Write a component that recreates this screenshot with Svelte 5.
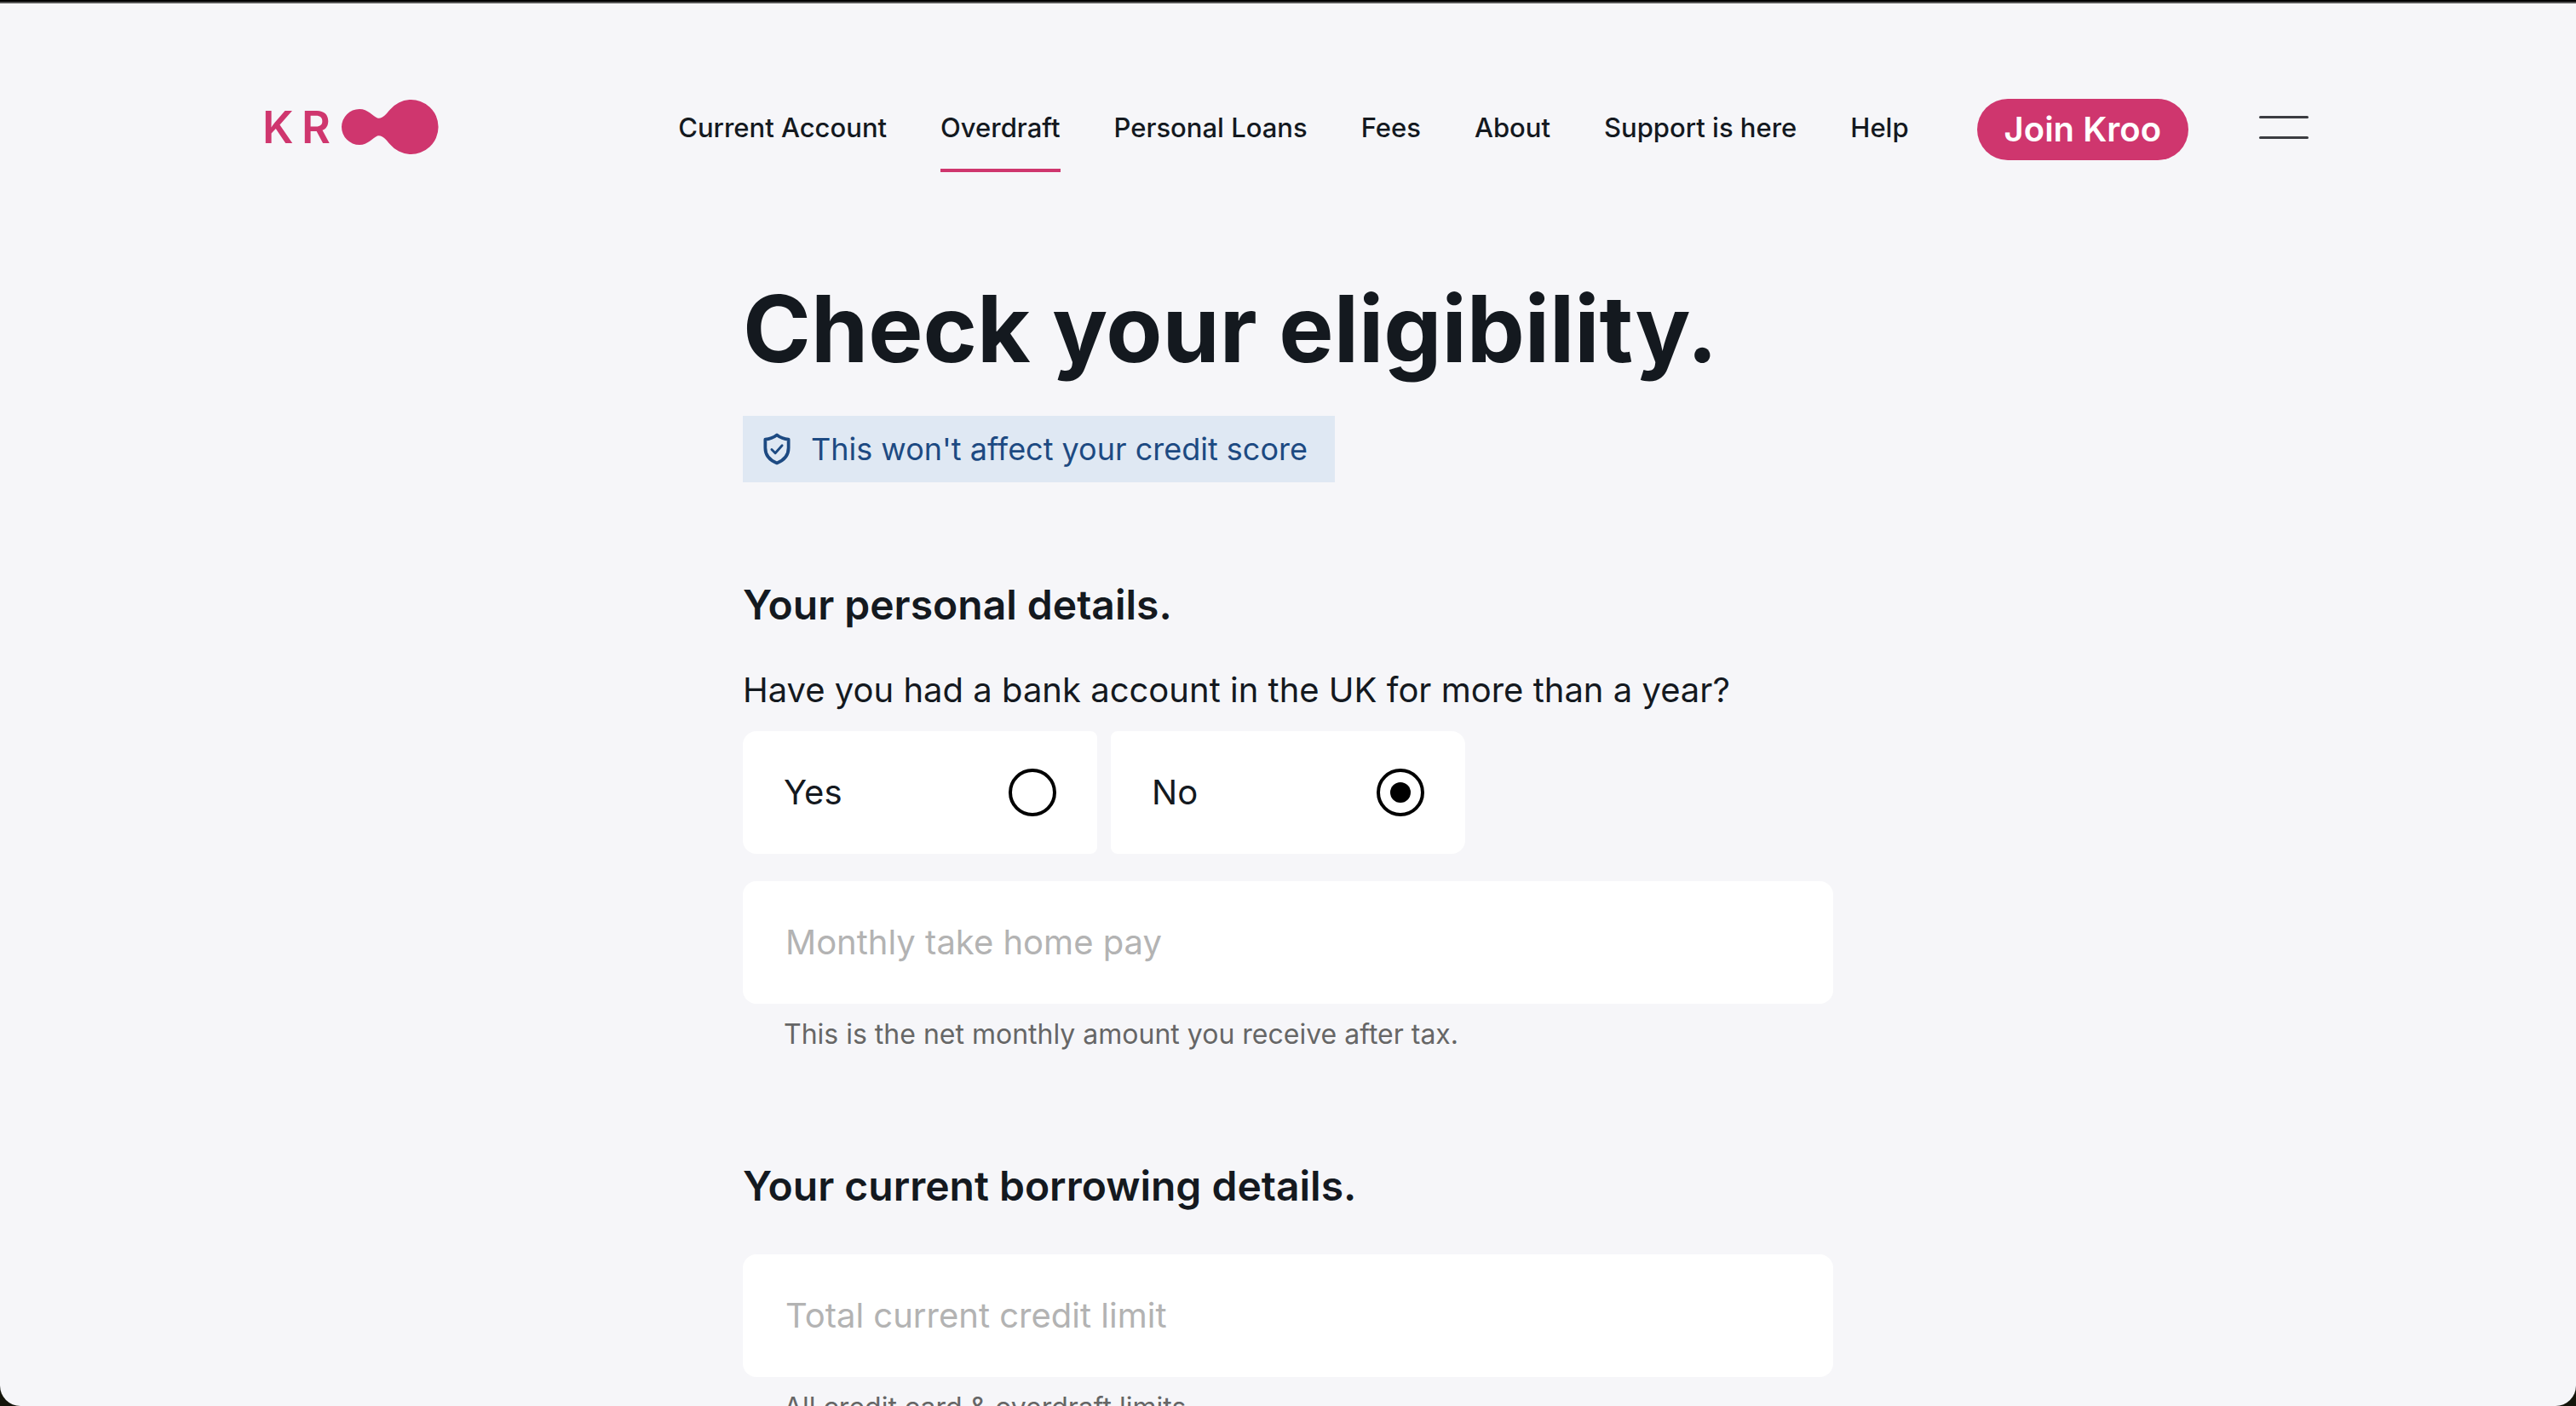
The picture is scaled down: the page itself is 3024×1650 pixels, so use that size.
<script>
  const links = ['Current Account', 'Overdraft', 'Personal Loans', 'Fees', 'About', 'Support is here', 'Help'];
  const current = 'Overdraft';
  let hadAccount = $state('No');
  let pay = $state('');
  let limit = $state('');
</script>

<div class="window">
  <header>
    <a class="logo" href="#home" aria-label="Kroo home">
      <svg viewBox="0 0 204 64" aria-hidden="true">
        <text x="-4 42" y="51">KR</text>
        <path d="M110 11C120 11 125 19 131 21.500C137 23 141 17 146 11.500A32 32 0 1 1 146 52.500C141 47 137 41 131 42.500C125 45 120 53 110 53A21 21 0 1 1 110 11Z" />
      </svg>
    </a>
    <nav aria-label="Main">
      {#each links as link}
        <a href="#{link.toLowerCase().replaceAll(' ', '-')}" class:active={link === current} aria-current={link === current ? 'page' : undefined}>{link}</a>
      {/each}
    </nav>
    <button class="join" type="button">Join Kroo</button>
    <button class="menu" type="button" aria-label="Open menu"><i></i><i></i></button>
  </header>

  <main>
    <h1>Check your eligibility.</h1>
    <p class="notice">
      <svg viewBox="0 0 34 40" aria-hidden="true">
        <path class="shield" d="M17 2.500C13 5.500 8.500 7.500 2.500 8V18.500C2.500 28 8 34 17 37.500C26 34 31.500 28 31.500 18.500V8C25.500 7.500 21 5.500 17 2.500Z" />
        <path class="tick" d="M10.500 20.500L15 25L23.500 15.500" />
      </svg>
      <span>This won't affect your credit score</span>
    </p>

    <form>
      <section>
        <h2>Your personal details.</h2>
        <fieldset>
          <legend>Have you had a bank account in the UK for more than a year?</legend>
          <div class="options">
            {#each ['Yes', 'No'] as option}
              <label class="option">
                <span>{option}</span>
                <input type="radio" name="account" value={option} bind:group={hadAccount} />
              </label>
            {/each}
          </div>
        </fieldset>
        <div class="field">
          <input id="pay" type="text" aria-describedby="pay-hint" bind:value={pay} />
          <label for="pay" class:filled={pay !== ''}>Monthly take home pay</label>
          <p id="pay-hint">This is the net monthly amount you receive after tax.</p>
        </div>
      </section>

      <section>
        <h2>Your current borrowing details.</h2>
        <div class="field">
          <input id="limit" type="text" aria-describedby="limit-hint" bind:value={limit} />
          <label for="limit" class:filled={limit !== ''}>Total current credit limit</label>
          <p id="limit-hint">All credit card &amp; overdraft limits</p>
        </div>
      </section>
    </form>
  </main>
</div>

<style>
  :global(body) {
    margin: 0;
    background: #14150b;
  }

  .window {
    box-sizing: border-box;
    height: 100vh;
    overflow: hidden;
    background: #f6f6f9;
    border-top: 2px solid #000;
    border-radius: 0 0 24px 24px;
    box-shadow: inset 0 2px #555;
    color: #14191f;
    font-family: Inter, "Liberation Sans", sans-serif;
    font-size: 40px;
    line-height: 56px;
  }

  header {
    box-sizing: border-box;
    display: flex;
    align-items: center;
    max-width: 2400px;
    margin: 0 auto;
    padding: 94px 2px 0 0;
  }

  .logo {
    display: block;
    width: 204px;
    height: 64px;
    margin-right: auto;
  }

  .logo svg {
    display: block;
    width: 100%;
    height: 100%;
    overflow: visible;
    fill: #cf366e;
  }

  .logo text {
    font-size: 52px;
    font-weight: 600;
  }

  nav {
    display: flex;
    gap: 63px;
    margin-right: 80px;
  }

  nav a {
    padding: 34px 0 28px;
    border-bottom: 4px solid transparent;
    color: inherit;
    font-size: 31px;
    font-weight: 500;
    line-height: 40px;
    text-decoration: none;
    white-space: nowrap;
  }

  nav a.active {
    border-color: #cf366e;
  }

  button {
    border: 0;
    font: inherit;
    cursor: pointer;
  }

  .join {
    height: 72px;
    margin-top: 6px;
    padding: 0 32px;
    border-radius: 36px;
    background: #cf366e;
    color: #fff;
    font-weight: 600;
    white-space: nowrap;
  }

  .menu {
    display: flex;
    flex-direction: column;
    gap: 21px;
    margin-left: 83px;
    padding: 0;
    background: none;
  }

  .menu i {
    width: 58px;
    height: 3px;
    border-radius: 2px;
    background: #3c3d42;
  }

  main {
    max-width: 1280px;
    margin: 0 auto;
    padding-top: 116px;
  }

  h1,
  h2,
  p {
    margin: 0;
  }

  h1 {
    font-size: 108px;
    font-weight: 700;
    line-height: 136px;
  }

  .notice {
    display: flex;
    align-items: center;
    width: fit-content;
    margin-top: 34px;
    padding: 15px 32px 15px 24px;
    gap: 24px;
    background: #dfe8f3;
    color: #1d4a82;
    font-size: 36px;
    line-height: 48px;
  }

  .notice svg {
    width: 32px;
    height: 38px;
    fill: none;
    stroke: currentColor;
    stroke-linejoin: round;
    stroke-linecap: round;
  }

  .shield {
    stroke-width: 4;
  }

  .tick {
    stroke-width: 3;
  }

  section {
    padding-top: 126px;
  }

  section:first-child {
    padding-top: 112px;
  }

  h2 {
    margin-bottom: 48px;
    font-size: 48px;
    font-weight: 600;
    line-height: 64px;
  }

  fieldset {
    min-width: 0;
    margin: 0 0 32px;
    padding: 0;
    border: 0;
  }

  legend {
    padding: 0 0 28px;
    line-height: 40px;
  }

  .options {
    display: flex;
    gap: 16px;
  }

  .option {
    box-sizing: border-box;
    display: flex;
    align-items: center;
    justify-content: space-between;
    width: 416px;
    height: 144px;
    padding: 0 48px;
    border-radius: 8px;
    background: #fff;
  }

  .option:first-child {
    border-radius: 16px 8px 8px 16px;
  }

  .option:last-child {
    border-radius: 8px 16px 16px 8px;
  }

  .option input {
    appearance: none;
    display: grid;
    place-content: center;
    box-sizing: border-box;
    width: 56px;
    height: 56px;
    margin: 0;
    border: 4px solid #000;
    border-radius: 50%;
  }

  .option input:checked::before {
    content: "";
    width: 24px;
    height: 24px;
    border-radius: 50%;
    background: #000;
  }

  .field {
    display: grid;
    grid-template-rows: 144px auto;
  }

  .field input,
  .field label {
    grid-area: 1 / 1;
    padding: 0 50px;
  }

  .field input {
    box-sizing: border-box;
    width: 100%;
    border: 0;
    border-radius: 16px;
    background: #fff;
    color: inherit;
    font: inherit;
  }

  .field label {
    align-self: center;
    color: #b3b3b3;
    pointer-events: none;
  }

  .field label.filled {
    align-self: start;
    font-size: 24px;
    line-height: 40px;
  }

  .field p {
    padding: 16px 48px 0;
    color: #666;
    font-size: 32px;
    line-height: 40px;
  }
</style>
